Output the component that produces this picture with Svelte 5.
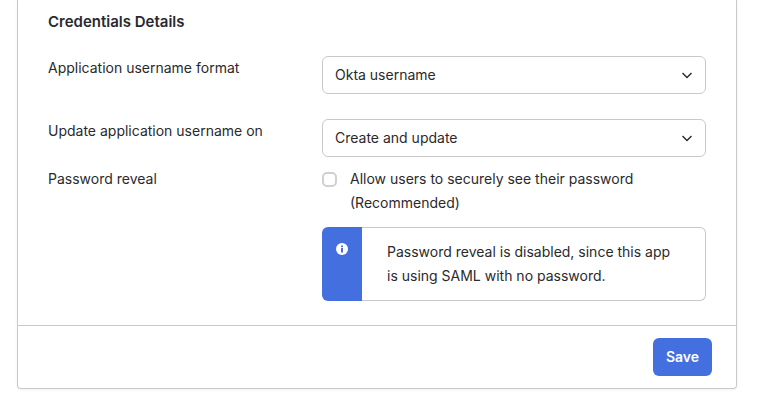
<script>
	let format = 'Okta username';
	let updateOn = 'Create and update';
	let reveal = false;
</script>

<div class="page">
	<section class="card">
		<div class="body">
			<h2>Credentials Details</h2>

			<div class="row select-row">
				<span class="label">Application username format</span>
				<div class="field select">
					<span>{format}</span>
					<svg width="12" height="12" viewBox="0 0 12 12" fill="none" aria-hidden="true">
						<path d="M1.500 4l4.500 4.500L10.500 4" stroke="#2a2a2e" stroke-width="1.400" />
					</svg>
				</div>
			</div>

			<div class="row select-row">
				<span class="label">Update application username on</span>
				<div class="field select">
					<span>{updateOn}</span>
					<svg width="12" height="12" viewBox="0 0 12 12" fill="none" aria-hidden="true">
						<path d="M1.500 4l4.500 4.500L10.500 4" stroke="#2a2a2e" stroke-width="1.400" />
					</svg>
				</div>
			</div>

			<div class="row reveal-row">
				<span class="label">Password reveal</span>
				<div class="reveal">
					<label class="check">
						<span class="box" class:on={reveal}></span>
						<span>Allow users to securely see their password<br />(Recommended)</span>
					</label>
					<div class="notice">
						<div class="notice-side">
							<svg width="12" height="12" viewBox="0 0 12 12" aria-hidden="true">
								<circle cx="6" cy="6" r="6" fill="#fff" />
								<rect x="5" y="5" width="2" height="4.500" fill="#4370de" />
								<rect x="5" y="2.500" width="2" height="1.700" fill="#4370de" />
							</svg>
						</div>
						<p>Password reveal is disabled, since this app<br />is using SAML with no password.</p>
					</div>
				</div>
			</div>
		</div>

		<footer>
			<button type="button">Save</button>
		</footer>
	</section>
</div>

<style>
	:global(body) {
		margin: 0;
		background: #fff;
	}

	.page {
		width: 778px;
		height: 407px;
		padding-left: 17px;
		box-sizing: border-box;
		overflow: hidden;
		font-family: Inter, "Noto Sans", sans-serif;
		font-size: 14px;
		line-height: 24px;
		color: #2a2a2e;
	}

	.card {
		width: 720px;
		box-sizing: border-box;
		background: #fff;
		border: 1px solid #c9c9c9;
		border-top: none;
		border-radius: 0 0 4px 4px;
		box-shadow: 0 1px 3px rgba(0, 0, 0, 0.06);
	}

	.body {
		padding: 10px 30px 24px;
		border-bottom: 1px solid #c9c9c9;
	}

	h2 {
		margin: 0 0 22px;
		font-size: 15px;
		line-height: 24px;
		font-weight: 600;
	}

	.row {
		display: grid;
		grid-template-columns: 274px 384px;
	}

	.select-row {
		height: 38px;
		margin-bottom: 25px;
	}

	.reveal-row {
		margin-top: -15px;
	}

	.field {
		box-sizing: border-box;
		height: 38px;
		border: 1px solid #c9c9c9;
		border-radius: 6px;
	}

	.select {
		display: flex;
		align-items: center;
		justify-content: space-between;
		padding: 0 12px;
	}

	.reveal {
		display: flex;
		flex-direction: column;
		gap: 12px;
	}

	.check {
		display: flex;
		gap: 13px;
	}

	.box {
		flex: none;
		box-sizing: border-box;
		width: 15px;
		height: 15px;
		margin-top: 5px;
		border: 2px solid #d0d0d0;
		border-radius: 5px;
	}

	.notice {
		display: flex;
		box-sizing: border-box;
		height: 74px;
	}

	.notice-side {
		flex: none;
		display: flex;
		justify-content: center;
		align-items: flex-start;
		box-sizing: border-box;
		width: 40px;
		padding-top: 16px;
		border-radius: 6px 0 0 6px;
		background: #4370de;
	}

	.notice p {
		flex: 1;
		margin: 0;
		padding: 12px 0 0 25px;
		border: 1px solid #c9c9c9;
		border-left: none;
		border-radius: 0 6px 6px 0;
	}

	footer {
		display: flex;
		justify-content: flex-end;
		padding: 12px 24px;
	}

	button {
		width: 59px;
		height: 38px;
		padding: 0;
		border: none;
		border-radius: 6px;
		background: #4370de;
		color: #fff;
		font: 600 14px/24px Inter, "Noto Sans", sans-serif;
	}
</style>
